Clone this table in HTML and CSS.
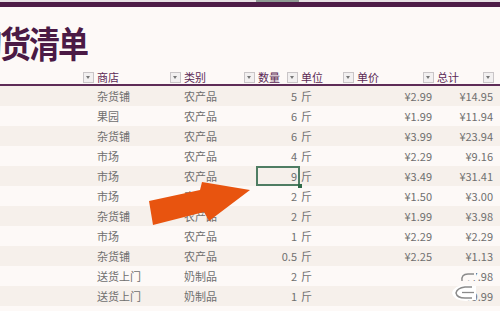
FILE: index.html
```html
<!DOCTYPE html>
<html lang="zh">
<head>
<meta charset="utf-8">
<link rel="stylesheet" href="styles.css">
</head>
<body>
<div class="sheet">
  <div class="colhead"><div class="selcol"></div></div>
  <div class="band"></div>
  <div class="title"><span>购货清单</span></div>
  <div class="table">
    <div class="row head">
      <div class="c"><i class="dd"></i></div>
      <div class="c">商店<i class="dd"></i></div>
      <div class="c">类别<i class="dd"></i></div>
      <div class="c">数量<i class="dd"></i></div>
      <div class="c">单位<i class="dd"></i></div>
      <div class="c">单价<i class="dd"></i></div>
      <div class="c">总计<i class="dd"></i></div>
      <div class="c"></div>
    </div>
    <div class="row odd"><div class="c"></div><div class="c">杂货铺</div><div class="c">农产品</div><div class="c r">5</div><div class="c">斤</div><div class="c r p3">¥2.99</div><div class="c r">¥14.95</div><div class="c"></div></div>
    <div class="row"><div class="c"></div><div class="c">果园</div><div class="c">农产品</div><div class="c r">6</div><div class="c">斤</div><div class="c r p3">¥1.99</div><div class="c r">¥11.94</div><div class="c"></div></div>
    <div class="row odd"><div class="c"></div><div class="c">杂货铺</div><div class="c">农产品</div><div class="c r">6</div><div class="c">斤</div><div class="c r p3">¥3.99</div><div class="c r">¥23.94</div><div class="c"></div></div>
    <div class="row"><div class="c"></div><div class="c">市场</div><div class="c">农产品</div><div class="c r">4</div><div class="c">斤</div><div class="c r p3">¥2.29</div><div class="c r">¥9.16</div><div class="c"></div></div>
    <div class="row odd"><div class="c"></div><div class="c">市场</div><div class="c">农产品</div><div class="c r sel">9</div><div class="c">斤</div><div class="c r p3">¥3.49</div><div class="c r">¥31.41</div><div class="c"></div></div>
    <div class="row"><div class="c"></div><div class="c">市场</div><div class="c">农产品</div><div class="c r">2</div><div class="c">斤</div><div class="c r p3">¥1.50</div><div class="c r">¥3.00</div><div class="c"></div></div>
    <div class="row odd"><div class="c"></div><div class="c">杂货铺</div><div class="c">农产品</div><div class="c r">2</div><div class="c">斤</div><div class="c r p3">¥1.99</div><div class="c r">¥3.98</div><div class="c"></div></div>
    <div class="row"><div class="c"></div><div class="c">市场</div><div class="c">农产品</div><div class="c r">1</div><div class="c">斤</div><div class="c r p3">¥2.29</div><div class="c r">¥2.29</div><div class="c"></div></div>
    <div class="row odd"><div class="c"></div><div class="c">杂货铺</div><div class="c">农产品</div><div class="c r">0.5</div><div class="c">斤</div><div class="c r p3">¥2.25</div><div class="c r">¥1.13</div><div class="c"></div></div>
    <div class="row"><div class="c"></div><div class="c">送货上门</div><div class="c">奶制品</div><div class="c r">2</div><div class="c">斤</div><div class="c r p3"></div><div class="c r">¥7.98</div><div class="c"></div></div>
    <div class="row odd"><div class="c"></div><div class="c">送货上门</div><div class="c">奶制品</div><div class="c r">1</div><div class="c">斤</div><div class="c r p3"></div><div class="c r">¥9.99</div><div class="c"></div></div>
    <div class="row"><div class="c"></div><div class="c"></div><div class="c"></div><div class="c"></div><div class="c"></div><div class="c"></div><div class="c"></div><div class="c"></div></div>
  </div>
  <svg class="arrow" width="500" height="311" viewBox="0 0 500 311">
    <polygon points="149,201 200,190 202,182 250,190 209,221 204,212 153,225" fill="#e8540f"/>
  </svg>
  <svg class="mark" width="500" height="311" viewBox="0 0 500 311">
    <path d="M455,277 Q458,272 466,272 L476,273 L476,280 L462,281 Z" fill="#fdf9f7"/>
    <path d="M462,281 Q461,274 468,274 L474,274" fill="none" stroke="#8a8a8a" stroke-width="1.4"/>
    <path d="M452,293 Q454,285 466,285 L476,286 L476,300 L466,301 Q453,300 452,293 Z" fill="#ffffff"/>
    <path d="M472,287 L465,287 Q457,288 456,293 Q457,298 465,298 L472,298" fill="none" stroke="#8a8a8a" stroke-width="1.4"/>
    <path d="M462,292.5 L474,292.5" fill="none" stroke="#8a8a8a" stroke-width="1.3"/>
  </svg>
</div>
</body>
</html>
```

FILE: styles.css
```css
html, body {
  margin: 0;
  padding: 0;
  background: #fdf9f7;
}
body {
  font-family: "Noto Sans CJK SC", "Noto Sans", sans-serif;
  overflow: hidden;
}
.sheet {
  position: relative;
  width: 500px;
  height: 311px;
  overflow: hidden;
}
.colhead {
  display: grid;
  grid-template-columns: 95px 87px 74px 43px 56px 80px 60px 5px;
  height: 2px;
  background: #e7e1e4;
}
.selcol {
  grid-column: 4;
  background: #8e9b93;
}
.band {
  height: 5px;
  background: #4e1c47;
}
.title {
  height: 59px;
  box-sizing: border-box;
  padding-top: 12px;
  line-height: 47px;
  white-space: nowrap;
  overflow: hidden;
}
.title span {
  display: inline-block;
  margin-left: -29px;
  font-size: 31px;
  font-weight: 700;
  letter-spacing: -2px;
  color: #4b1a45;
  transform: scaleY(1.17);
}
.row {
  display: grid;
  grid-template-columns: 95px 87px 74px 43px 56px 80px 60px 5px;
  height: 20px;
  font-size: 11px;
  color: #6f6f6f;
}
.row.odd {
  background: #f6f0eb;
}
.row.head {
  box-sizing: border-box;
  padding-top: 3px;
  border-bottom: 2px solid #5e2c57;
  color: #5c2a55;
}
.c {
  display: flex;
  align-items: center;
  padding: 0 2px;
  white-space: nowrap;
  min-width: 0;
}
.c.r {
  justify-content: flex-end;
}
.c.p3 {
  padding-right: 3px;
}
.head .c {
  padding-right: 1px;
}
.dd {
  margin-left: auto;
  width: 9px;
  height: 9px;
  border: 1px solid #c9c5c7;
  background: #f2f0f0;
  position: relative;
}
.dd::after {
  content: "";
  position: absolute;
  left: 2px;
  top: 3px;
  border-left: 2.5px solid transparent;
  border-right: 2.5px solid transparent;
  border-top: 3px solid #777;
}
.sel {
  position: relative;
}
.sel::before {
  content: "";
  position: absolute;
  left: 0;
  top: 0;
  right: -1px;
  bottom: 0;
  border: 2px solid #4f7d63;
}
.sel::after {
  content: "";
  position: absolute;
  right: -3px;
  bottom: -2px;
  width: 4px;
  height: 4px;
  background: #2f6a48;
}
.arrow, .mark {
  position: absolute;
  left: 0;
  top: 0;
}
```
